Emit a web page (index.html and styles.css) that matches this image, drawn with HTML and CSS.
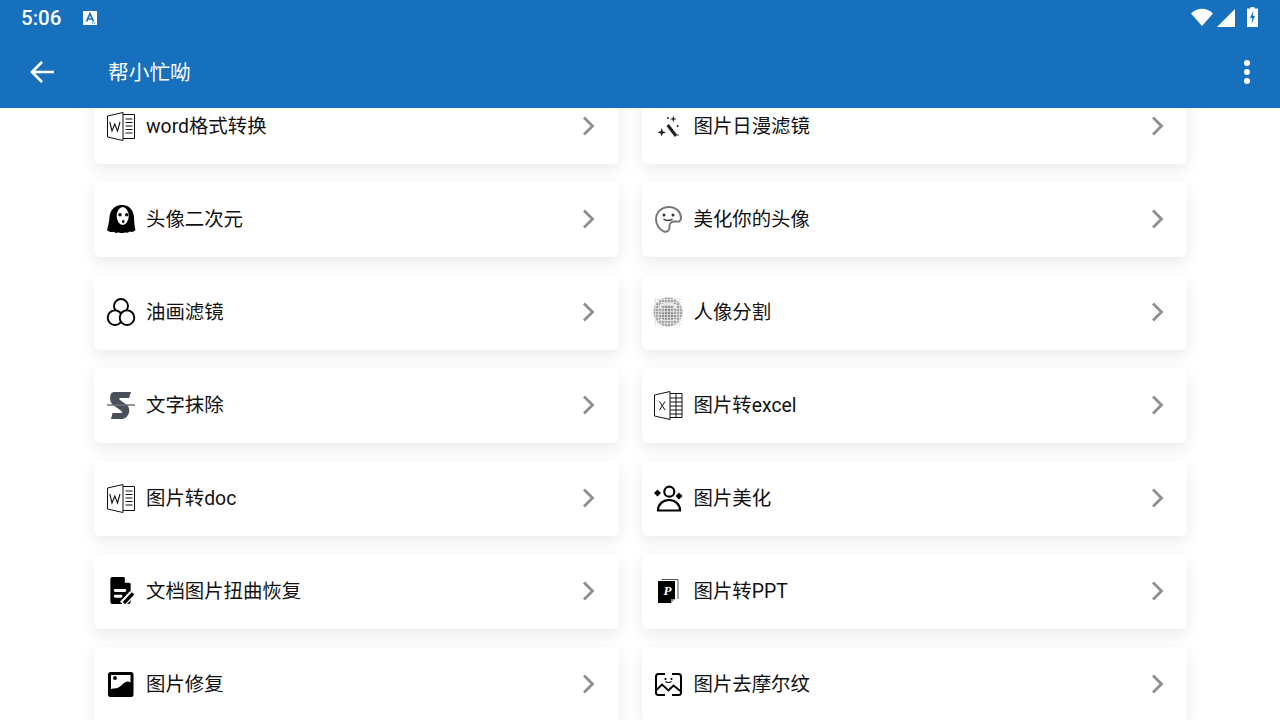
FILE: index.html
```html
<!DOCTYPE html>
<html lang="zh">
<head>
<meta charset="utf-8">
<title>帮小忙呦</title>
<link rel="stylesheet" href="styles.css">
</head>
<body>
<svg class="defs" width="0" height="0" aria-hidden="true">
  <defs>
    <symbol id="chev" viewBox="0 0 14 20"><path d="M2 1.500 10.500 10 2 18.500" fill="none" stroke="#8f8f8f" stroke-width="2.800"/></symbol>
    <symbol id="word" viewBox="0 0 28 29">
      <path d="M.5 4 16 .5v28L.5 25Z" fill="#fff" stroke="#111"/>
      <path d="M16 2.500H27.500V26.500H16M18.500 7h7M18.500 10.500h7M18.500 14h7M18.500 17.500h7M18.500 21h7" fill="none" stroke="#111"/>
      <path d="M2.800 10 5 19 7.800 12 10.500 19 13 10" fill="none" stroke="#111" stroke-width="1.100"/>
    </symbol>
  </defs>
</svg>
<div class="status">
  <span class="time">5:06</span>
  <svg class="a-icon" viewBox="0 0 16 16"><path d="M1 1h14v14H1z" fill="#fff"/><path d="M4.500 11.500 8 3.500l3.500 8M5.800 9h4.400" fill="none" stroke="#1670be" stroke-width="1.700"/><path d="M10 13h1M12 13h1" stroke="#1670be"/></svg>
  <span class="spacer"></span>
  <svg class="wifi" viewBox="0 0 22 18"><path d="M0 5.500C6-.8 16-.8 22 5.500L11 18Z" fill="#fff"/></svg>
  <svg class="signal" viewBox="0 0 18 18"><path d="M0 18 18 0v18Z" fill="#fff"/></svg>
  <svg class="battery" viewBox="0 0 11 20"><path d="M3.500 0h4v1.500H11V20H0V1.500h3.500Z" fill="#fff"/><path d="M6.500 3.500 3 11h2.300L4.500 17 8 9H5.700Z" fill="#1670be"/></svg>
</div>
<header class="appbar">
  <svg class="back" viewBox="0 0 26 24"><path d="M25 12H3M13 2 3 12l10 10" fill="none" stroke="#fff" stroke-width="2.600"/></svg>
  <h1 class="title">帮小忙呦</h1>
  <span class="spacer"></span>
  <span class="more"><i></i><i></i><i></i></span>
</header>
<main class="viewport">
  <div class="grid">
    <a class="card"><svg class="icon tall"><use href="#word"/></svg><span class="label">word格式转换</span><svg class="chev"><use href="#chev"/></svg></a>
    <a class="card">
      <svg class="icon" viewBox="0 0 28 28"><path d="M13.700 13 22 24" stroke="#222" stroke-width="3" fill="none"/><path d="M7.700 16l1.100 3.200 3.200 1.100-3.200 1.100-1.100 3.200-1.100-3.200-3.200-1.100 3.200-1.100ZM19.300 3.500l.8 2.700 2.700.8-2.700.8-.8 2.700-.8-2.700-2.700-.8 2.700-.8Z" fill="#222"/><circle cx="23.700" cy="14" r="1" fill="#222"/><circle cx="14" cy="6" r="1" fill="#222"/><circle cx="24" cy="23" r=".8" fill="#222"/></svg>
      <span class="label">图片日漫滤镜</span><svg class="chev"><use href="#chev"/></svg></a>
    <a class="card">
      <svg class="icon" viewBox="0 0 28 28"><path d="M15 0C23 0 26.500 6 27 12 27.300 18 27.500 22 28.500 25c-1.800 2-4 2.500-6 1.500-1.500 1.500-3 1.800-4.500.7-2 1.200-4.500 1.200-6.500 0-1.500 1.300-3 1-4.500-.5C4.500 27.500 2 27 0 25c1-3 2-7 2.500-13C3 6 7 0 15 0Z" fill="#000"/><ellipse cx="15.700" cy="11" rx="6" ry="9" fill="#fff"/><circle cx="13" cy="9.800" r="1.700"/><circle cx="19.700" cy="9.800" r="1.700"/><ellipse cx="16.300" cy="16.500" rx="1.200" ry="1.800"/></svg>
      <span class="label">头像二次元</span><svg class="chev"><use href="#chev"/></svg></a>
    <a class="card">
      <svg class="icon" viewBox="0 0 28 28"><path d="M15 2C22 2 27 7 27 13c0 3-2 4-5 3.500-4-.5-7 1.500-6.500 5.500.5 3-2.500 5.500-5.500 4.500C5 25 2 19 2 14 2 7 8 2 15 2Z" fill="#fff" stroke="#777" stroke-width="2"/><circle cx="10" cy="10" r="1.500" fill="#333"/><circle cx="19" cy="10" r="1.500" fill="#333"/><path d="M9.500 14c2.500 2 6.500 2 9 0" fill="none" stroke="#333" stroke-width="1.500"/></svg>
      <span class="label">美化你的头像</span><svg class="chev"><use href="#chev"/></svg></a>
    <a class="card">
      <svg class="icon" viewBox="0 0 28 28" fill="#fff" stroke="#000" stroke-width="1.900"><circle cx="14" cy="8" r="7"/><circle cx="8" cy="19.700" r="7.300"/><circle cx="20" cy="19.700" r="7.300"/></svg>
      <span class="label">油画滤镜</span><svg class="chev"><use href="#chev"/></svg></a>
    <a class="card">
      <svg class="icon" viewBox="0 0 28 28"><circle cx="14" cy="14" r="14.500" fill="#a6a6a6"/><path d="M6 6h3v-1h10v1h3v3h1v1h-3v-2h-2v-1H9v1H7v2H5V9h1ZM5 19h2v2h2v1h10v-1h2v-2h2v1h-1v2h-3v1H9v-1H6v-2H5Z" fill="#eee"/><path d="M10 7h8v5h-1v3h3v3h2v3H6v-3h2v-3h3v-3h-1Z" fill="#8c8c8c"/><path d="M0 1.500h28M0 4.500h28M0 7.500h28M0 10.500h28M0 13.500h28M0 16.500h28M0 19.500h28M0 22.500h28M0 25.500h28M1.500 0v28M4.500 0v28M7.500 0v28M10.500 0v28M13.500 0v28M16.500 0v28M19.500 0v28M22.500 0v28M25.500 0v28" stroke="#e2e2e2" stroke-width=".8"/></svg>
      <span class="label">人像分割</span><svg class="chev"><use href="#chev"/></svg></a>
    <a class="card">
      <svg class="icon" viewBox="0 0 28 28"><path d="M7 1H24L22 7H13C12 7 12 8.500 13 9L20 14C24 17 23 28 14 28H4L5.500 22H14C15.500 22 15.500 20.500 14.500 20L6 14C2 11 2 1 7 1Z" fill="#4a4f5c"/><path d="M0 14h28" stroke="#6d717b" stroke-width="1.500"/></svg>
      <span class="label">文字抹除</span><svg class="chev"><use href="#chev"/></svg></a>
    <a class="card">
      <svg class="icon tall" viewBox="0 0 28 29"><path d="M.5 4 16 .5v28L.5 25Z" fill="#fff" stroke="#111"/><path d="M16 2.500H28V26.500H16M16 7h12M16 11h12M16 15h12M16 19h12M16 23h12M22 2.500v24" fill="none" stroke="#111"/><path d="M5.500 10.500 11 19M11 10.500 5.500 19" fill="none" stroke="#111"/></svg>
      <span class="label">图片转excel</span><svg class="chev"><use href="#chev"/></svg></a>
    <a class="card"><svg class="icon tall"><use href="#word"/></svg><span class="label">图片转doc</span><svg class="chev"><use href="#chev"/></svg></a>
    <a class="card">
      <svg class="icon" viewBox="0 0 28 28"><circle cx="15.300" cy="7.700" r="5" fill="none" stroke="#000" stroke-width="2.200"/><path d="M4 26.500C4 20 9 16 15 16s11 4 11 10.500Z" fill="none" stroke="#000" stroke-width="2.200"/><path d="M3.500 5.500 7 9 3.500 12.500 0 9ZM25 8.500 28.500 12 25 15.500 21.500 12Z" fill="#000"/></svg>
      <span class="label">图片美化</span><svg class="chev"><use href="#chev"/></svg></a>
    <a class="card">
      <svg class="icon" viewBox="0 0 28 29"><path d="M5 0h12l7 7v19a2 2 0 0 1-2 2H5a2 2 0 0 1-2-2V2a2 2 0 0 1 2-2Z" fill="#000"/><path d="M18 0v6h6Z" fill="#fff"/><path d="M8 12.500h10a1.500 1.500 0 0 1 0 3H8a1.500 1.500 0 0 1 0-3ZM8 18.500h6a1.500 1.500 0 0 1 0 3H8a1.500 1.500 0 0 1 0-3Z" fill="#fff"/><path d="M15.500 28 26 17" stroke="#fff" stroke-width="7"/><path d="M17 27 26.500 17" stroke="#000" stroke-width="3.500"/></svg>
      <span class="label">文档图片扭曲恢复</span><svg class="chev"><use href="#chev"/></svg></a>
    <a class="card">
      <svg class="icon" viewBox="0 0 28 28"><path d="M7.500 2.500H24V22" fill="none" stroke="#555"/><path d="M4 4h17v18h-4v4H4Z" fill="#000"/><path d="M17 22h4l-4 4Z" fill="#888"/><text class="ppt-p" x="13.500" y="18" text-anchor="middle">P</text></svg>
      <span class="label">图片转PPT</span><svg class="chev"><use href="#chev"/></svg></a>
    <a class="card">
      <svg class="icon" viewBox="0 0 28 28"><rect x="1" y="2" width="25.500" height="25" rx="2.500" fill="#000"/><path d="M4 5h19.500v7.500c-4-3-7.500 1.500-10.500 4-3 2.500-6 1.500-9 2.500Z" fill="#fff"/><circle cx="8" cy="8" r="1.900" fill="#000"/></svg>
      <span class="label">图片修复</span><svg class="chev"><use href="#chev"/></svg></a>
    <a class="card">
      <svg class="icon" viewBox="0 0 28 28"><path d="M11 4H4.500A2.500 2.500 0 0 0 2 6.500v16A2.500 2.500 0 0 0 4.500 25H11M18 4h6.500A2.500 2.500 0 0 1 27 6.500v16a2.500 2.500 0 0 1-2.500 2.500H18" fill="none" stroke="#000" stroke-width="2"/><path d="M2 20.500 8 14.500l6.500 6 5-5 7.500 6" fill="none" stroke="#000" stroke-width="1.800"/><circle cx="11.500" cy="9" r="1.100"/><circle cx="17.500" cy="9" r="1.100"/><path d="M11.500 11.500c1.500 1.300 4.500 1.300 6 0" fill="none" stroke="#000" stroke-width="1.100"/></svg>
      <span class="label">图片去摩尔纹</span><svg class="chev"><use href="#chev"/></svg></a>
  </div>
</main>
</body>
</html>
```
FILE: styles.css
```css
* { box-sizing: border-box; }
html, body { margin: 0; height: 100%; }
body {
  width: 1280px;
  height: 720px;
  overflow: hidden;
  display: flex;
  flex-direction: column;
  background: #fff;
  font-family: Roboto, "Noto Sans CJK SC", sans-serif;
  color: #111;
}
.defs { position: absolute; }
.spacer { flex: 1; }
.status {
  height: 36px;
  flex: none;
  display: flex;
  align-items: center;
  background: #1670be;
  padding: 0 22px 0 21px;
  color: #fff;
}
.time { font-size: 20.500px; font-weight: 500; width: 61px; }
.a-icon { width: 16px; height: 16px; }
.wifi { width: 22px; height: 18px; margin: 0 4px 2px 0; }
.signal { width: 18px; height: 18px; margin-right: 12px; }
.battery { width: 11px; height: 20px; margin-bottom: 2px; }
.appbar {
  height: 72px;
  flex: none;
  display: flex;
  align-items: center;
  background: #1670be;
  padding: 0 30px 0 29px;
  color: #fff;
}
.back { width: 26px; height: 24px; }
.title { margin: 0 0 2px 53px; font-size: 20.700px; font-weight: 400; }
.more { display: flex; flex-direction: column; gap: 3px; }
.more i { width: 6px; height: 6px; border-radius: 50%; background: #fff; }
.viewport { flex: 1; overflow: hidden; }
.grid {
  display: grid;
  grid-template-columns: 525px 545px;
  grid-auto-rows: 75px;
  column-gap: 23px;
  row-gap: 18px;
  margin-top: -19px;
  padding-left: 94px;
}
.card {
  display: flex;
  align-items: center;
  background: #fff;
  border-radius: 6px;
  box-shadow: 0 5px 16px rgba(0, 0, 0, .085);
  padding: 0 23px 0 13px;
}
.card:nth-child(even) { padding: 0 22px 0 12px; }
.icon { width: 28px; height: 28px; flex: none; margin-bottom: 1px; overflow: visible; }
.icon.tall { height: 29px; }
.label { margin: 0 0 4px 11px; font-size: 19.400px; flex: 1; white-space: nowrap; }
.card:nth-child(even) .label { margin-left: 11.500px; }
.chev { width: 14px; height: 20px; flex: none; margin-bottom: 2px; }
.ppt-p { font-family: "Liberation Serif", serif; font-weight: 700; font-style: italic; font-size: 13px; fill: #fff; }
```
